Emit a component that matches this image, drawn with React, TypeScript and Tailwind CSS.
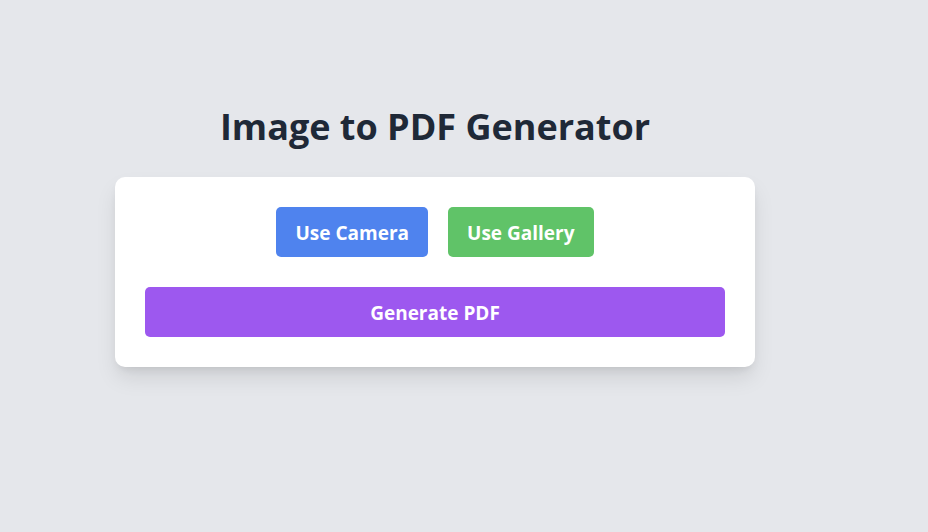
export default function App() {
  return (
    <main className="flex min-h-screen flex-col items-center justify-center bg-[#e5e7eb] pr-[58px] pb-[58px] font-['Open_Sans','Noto_Sans',sans-serif]">
      <h1 className="mb-[30px] text-[36px] leading-[40px] font-bold text-[#1f2937]">Image to PDF Generator</h1>
      <section className="w-full max-w-[640px] rounded-[10px] bg-white p-[30px] shadow-[0_12px_22px_-2px_rgba(0,0,0,0.1),0_5px_10px_-4px_rgba(0,0,0,0.1)]">
        <div className="mb-[30px] flex justify-center gap-5">
          <button type="button" className="h-[50px] rounded-[5px] bg-[#4f83ee] px-[19px] pt-0.5 text-[19px] leading-[30px] font-bold text-white">Use Camera</button>
          <button type="button" className="h-[50px] rounded-[5px] bg-[#60c368] px-[19px] pt-0.5 text-[19px] leading-[30px] font-bold text-white">Use Gallery</button>
        </div>
        <button type="button" className="h-[50px] w-full rounded-[5px] bg-[#9d58ef] px-[19px] pt-0.5 text-[19px] leading-[30px] font-bold text-white">Generate PDF</button>
      </section>
    </main>
  );
}
